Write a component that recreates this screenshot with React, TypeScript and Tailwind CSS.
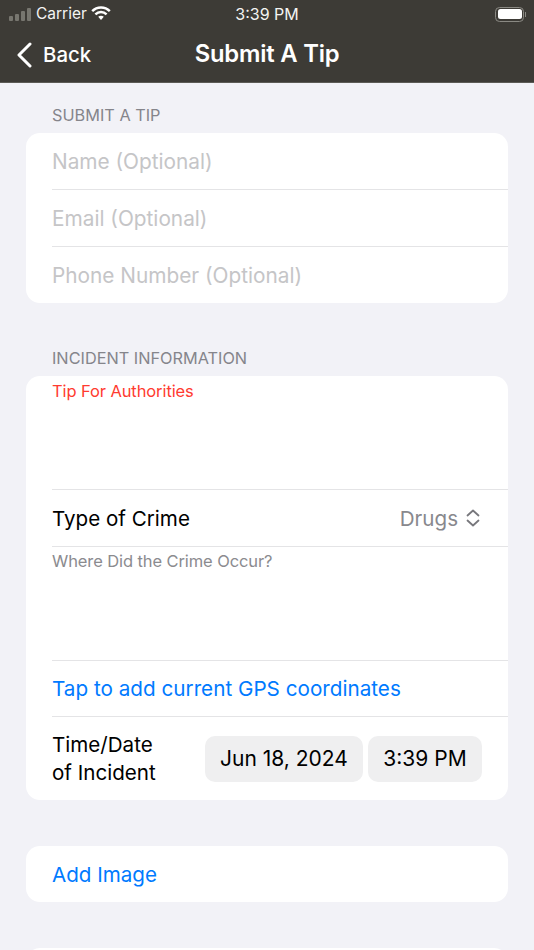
const font = "font-['Inter','Noto_Sans',sans-serif]";

function Divider() {
  return <div className="h-px ml-[26px] bg-[#e4e4e6] shrink-0" />;
}

function SectionLabel({ children }: { children: string }) {
  return <div className="h-[18px] pl-[52px] text-[16.3px] leading-[18px] text-[#85858b]">{children}</div>;
}

function Placeholder({ children }: { children: string }) {
  return <div className="h-[56px] flex items-center pl-[26px] pt-[2px] text-[20.8px] text-[#c5c5c7]">{children}</div>;
}

function StatusBar() {
  return (
    <div className="h-[28px] flex items-center pl-[9px] pr-[8px] relative text-white">
      <div className="flex items-end gap-[2px] h-[14px] mt-[-1px]">
        <div className="w-[4px] h-[5px] rounded-[1px] bg-[#77766f]" />
        <div className="w-[4px] h-[7px] rounded-[1px] bg-[#77766f]" />
        <div className="w-[4px] h-[10px] rounded-[1px] bg-[#77766f]" />
        <div className="w-[4px] h-[13px] rounded-[1px] bg-[#77766f]" />
      </div>
      <span className="ml-[5px] text-[15.5px] leading-none text-[#f4f4f2]">Carrier</span>
      <svg className="ml-[4px] mt-[-1px]" width="20" height="15" viewBox="0 0 20 15" fill="none" stroke="white" strokeWidth="2.4">
        <path d="M1.2 5.2 C6 0.2 14 0.2 18.8 5.2" />
        <path d="M4.4 8.4 C7.6 5.2 12.4 5.2 15.6 8.4" />
        <path d="M7.2 10.8 L10 14 L12.8 10.8 C11.2 9.4 8.8 9.4 7.2 10.8 Z" fill="white" stroke="none" />
      </svg>
      <span className="absolute left-0 right-0 text-center text-[16px] leading-none text-[#f4f4f2]">3:39 PM</span>
      <div className="ml-auto flex items-center">
        <div className="w-[29px] h-[15px] rounded-[4.5px] border border-[#8a8983] p-[1.5px]">
          <div className="w-full h-full rounded-[2.5px] bg-white" />
        </div>
        <div className="w-[1.5px] h-[5px] bg-[#8a8983] ml-[0.5px]" />
      </div>
    </div>
  );
}

function NavBar() {
  return (
    <div className="h-[55px] flex items-center relative text-white border-b border-[#5c5b56]">
      <svg className="ml-[16px]" width="16" height="26" viewBox="0 0 16 26" fill="none" stroke="white" strokeWidth="3" strokeLinecap="round" strokeLinejoin="round">
        <path d="M14 2 L3 13 L14 24" />
      </svg>
      <span className="ml-[11px] text-[20.4px] font-medium leading-none">Back</span>
      <span className="absolute left-0 right-0 text-center text-[23.8px] font-semibold leading-none mt-[-3px] tracking-[-0.2px]">Submit A Tip</span>
    </div>
  );
}

export default function App() {
  return (
    <div className={`${font} w-[534px] h-[950px] overflow-hidden bg-[#f2f2f7] flex flex-col`}>
      <div className="bg-[#3d3b36] shrink-0">
        <StatusBar />
        <NavBar />
      </div>

      <div className="flex flex-col">
        <div className="mt-[23px]"><SectionLabel>SUBMIT A TIP</SectionLabel></div>
        <div className="mt-[9px] mx-[26px] rounded-[14px] bg-white overflow-hidden">
          <Placeholder>Name (Optional)</Placeholder>
          <Divider />
          <Placeholder>Email (Optional)</Placeholder>
          <Divider />
          <Placeholder>Phone Number (Optional)</Placeholder>
        </div>

        <div className="mt-[46px]"><SectionLabel>INCIDENT INFORMATION</SectionLabel></div>
        <div className="mt-[9px] mx-[26px] rounded-[14px] bg-white overflow-hidden">
          <div className="h-[113px] pl-[26px] pt-[5px] text-[16.5px] leading-[20px] text-[#ff3b30] tracking-[-0.1px]">Tip For Authorities</div>
          <Divider />
          <div className="h-[56px] flex items-center pl-[26px] pr-[27px] pt-[2px] text-[20.6px] text-black">
            <span>Type of Crime</span>
            <span className="ml-auto text-[#88888d]">Drugs</span>
            <svg className="ml-[7px] mt-[-2px]" width="16" height="18" viewBox="0 0 16 18" fill="none" stroke="#77777c" strokeWidth="1.8" strokeLinecap="round" strokeLinejoin="round">
              <path d="M2.5 6.5 L8 1.5 L13.5 6.5" />
              <path d="M2.5 11.5 L8 16.5 L13.5 11.5" />
            </svg>
          </div>
          <Divider />
          <div className="h-[113px] pl-[26px] pt-[4px] text-[16.5px] leading-[20px] text-[#8b8b8f] tracking-[-0.1px]">Where Did the Crime Occur?</div>
          <Divider />
          <div className="h-[55px] flex items-center pl-[26px] pt-[1px] text-[20.7px] text-[#007aff]">Tap to add current GPS coordinates</div>
          <Divider />
          <div className="h-[83px] flex items-start pl-[26px] pr-[26px] text-black">
            <div className="mt-[14px] text-[20.6px] leading-[28px]">Time/Date<br />of Incident</div>
            <div className="ml-auto mt-[19px] flex gap-[5px] text-[21px]">
              <div className="w-[158px] h-[46px] rounded-[10px] bg-[#efeff0] flex items-center justify-center">Jun 18, 2024</div>
              <div className="w-[114px] h-[46px] rounded-[10px] bg-[#efeff0] flex items-center justify-center">3:39 PM</div>
            </div>
          </div>
        </div>

        <div className="mt-[46px] mx-[26px] h-[56px] rounded-[14px] bg-white flex items-center pl-[26px] pt-[2px] text-[20.6px] text-[#007aff]">Add Image</div>
        <div className="mt-[46px] mx-[26px] h-[56px] rounded-[14px] bg-white shrink-0" />
      </div>
    </div>
  );
}
